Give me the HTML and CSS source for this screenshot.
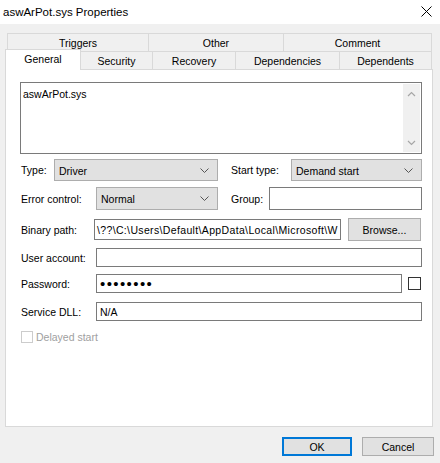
FILE: index.html
```html
<!DOCTYPE html>
<html>
<head>
<meta charset="utf-8">
<link rel="stylesheet" href="styles.css">
</head>
<body>
<div class="window">
  <div class="titlebar">
    <span class="title">aswArPot.sys Properties</span>
    <svg class="close" width="11" height="11" viewBox="0 0 11 11"><path d="M0.5 0.5 L10.5 10.5 M10.5 0.5 L0.5 10.5" stroke="#000" stroke-width="1" fill="none"/></svg>
  </div>
  <div class="tabs">
    <div class="tabrow row1">
      <div class="tab">Triggers</div>
      <div class="tab">Other</div>
      <div class="tab">Comment</div>
    </div>
    <div class="tabrow row2">
      <div class="tab active t-general">General</div>
      <div class="tab t-security">Security</div>
      <div class="tab t-recovery">Recovery</div>
      <div class="tab t-deps">Dependencies</div>
      <div class="tab t-dependents">Dependents</div>
    </div>
  </div>
  <div class="panel">
    <div class="desc">
      <div class="desc-text">aswArPot.sys</div>
      <div class="scrollbar">
        <svg width="9" height="6" viewBox="0 0 9 6"><path d="M1 5 L4.5 1.5 L8 5" stroke="#a6a6a6" stroke-width="1.2" fill="none"/></svg>
        <svg width="9" height="6" viewBox="0 0 9 6"><path d="M1 1 L4.5 4.5 L8 1" stroke="#a6a6a6" stroke-width="1.2" fill="none"/></svg>
      </div>
    </div>

    <div class="row r-type">
      <label class="lbl w-type">Type:</label>
      <div class="combo c-type"><span>Driver</span><svg width="9" height="5" viewBox="0 0 9 5"><path d="M0.5 0.5 L4.5 4.5 L8.5 0.5" stroke="#555" fill="none"/></svg></div>
      <label class="lbl w-start">Start type:</label>
      <div class="combo grow"><span>Demand start</span><svg width="9" height="5" viewBox="0 0 9 5"><path d="M0.5 0.5 L4.5 4.5 L8.5 0.5" stroke="#555" fill="none"/></svg></div>
    </div>

    <div class="row r-error">
      <label class="lbl w-error">Error control:</label>
      <div class="combo c-error"><span>Normal</span><svg width="9" height="5" viewBox="0 0 9 5"><path d="M0.5 0.5 L4.5 4.5 L8.5 0.5" stroke="#555" fill="none"/></svg></div>
      <label class="lbl w-group">Group:</label>
      <div class="textbox grow"></div>
    </div>

    <div class="row r-binary">
      <label class="lbl w-binary">Binary path:</label>
      <div class="textbox path"><span class="path-text">\??\C:\Users\Default\AppData\Local\Microsoft\W</span></div>
      <div class="button browse">Browse...</div>
    </div>

    <div class="row r-user">
      <label class="lbl w-error">User account:</label>
      <div class="textbox grow"></div>
    </div>

    <div class="row r-pass">
      <label class="lbl w-error">Password:</label>
      <div class="textbox pw"><span class="dots">••••••••</span></div>
      <div class="check pw-check"></div>
    </div>

    <div class="row r-dll">
      <label class="lbl w-error">Service DLL:</label>
      <div class="textbox grow"><span>N/A</span></div>
    </div>

    <div class="row r-delayed">
      <div class="check disabled"></div>
      <span class="delayed-label">Delayed start</span>
    </div>
  </div>
  <div class="footer">
    <div class="button ok">OK</div>
    <div class="button cancel">Cancel</div>
  </div>
</div>
</body>
</html>
```

FILE: styles.css
```css
* { box-sizing: border-box; }
html, body {
  margin: 0;
  padding: 0;
  background: #f0f0f0;
  font-family: "Liberation Sans", Arial, sans-serif;
  font-size: 10.5px;
  color: #000;
}
.window {
  width: 440px;
  height: 463px;
  background: #f0f0f0;
  overflow: hidden;
}
.titlebar {
  height: 24px;
  background: #fff;
  display: flex;
  align-items: center;
  justify-content: space-between;
  padding: 0 8px 0 3px;
}
.title {
  font-size: 11.5px;
  margin-top: -1px;
}
.close { display: block; margin-top: -1px; }

.tabs { margin-top: 9px; }
.tabrow { display: flex; height: 18px; }
.row1 { margin-left: 7px; }
.row1 .tab:nth-child(1) { width: 142px; border-left: 1px solid #d9d9d9; }
.row1 .tab:nth-child(2) { width: 135px; }
.row1 .tab:nth-child(3) { width: 148px; }
.tab {
  height: 18px;
  border-top: 1px solid #d9d9d9;
  border-right: 1px solid #d9d9d9;
  background: #f0f0f0;
  display: flex;
  align-items: center;
  justify-content: center;
  padding-top: 1px;
}
.row2 { margin-left: 5px; align-items: flex-end; }
.t-general {
  width: 76px;
  height: 21px;
  margin-bottom: -1px;
  background: #fff;
  border-left: 1px solid #d9d9d9;
  position: relative;
  z-index: 1;
  padding-top: 0;
  padding-bottom: 3px;
}
.t-security { width: 72px; }
.t-recovery { width: 83px; }
.t-deps { width: 104px; }
.t-dependents { width: 92px; }

.panel {
  margin-left: 5px;
  width: 428px;
  height: 358px;
  background: #fff;
  border: 1px solid #d9d9d9;
  padding: 12px 10px 0 14px;
}
.desc {
  height: 72px;
  border: 1px solid #7a7a7a;
  display: flex;
}
.desc-text {
  flex: 1;
  padding: 5px 2px;
}
.scrollbar {
  width: 17px;
  margin: 1px 1px 1px 0;
  background: #f0f0f0;
  display: flex;
  flex-direction: column;
  align-items: center;
  justify-content: space-between;
  padding: 7px 0 6px;
}
.scrollbar svg { display: block; }

.row { display: flex; align-items: center; }
.lbl { display: block; padding-left: 1px; white-space: nowrap; }
.r-type { margin-top: 5px; height: 22px; }
.r-error { margin-top: 6px; height: 23px; }
.r-binary { margin-top: 8px; height: 23px; }
.r-user { margin-top: 7px; height: 19px; }
.r-pass { margin-top: 7px; height: 19px; }
.r-dll { margin-top: 9px; height: 19px; }
.r-delayed { margin-top: 10px; height: 12px; }

.w-type { width: 34px; }
.w-start { width: 61px; margin-left: 12px; }
.w-error { width: 76px; }
.w-group { width: 39px; margin-left: 12px; }
.w-binary { width: 74px; }

.combo {
  height: 100%;
  background: #e1e1e1;
  border: 1px solid #adadad;
  display: flex;
  align-items: center;
  justify-content: space-between;
  padding: 1px 8px 0 4px;
}
.combo svg { display: block; margin-top: -1px; }
.c-type { width: 164px; }
.c-error { width: 122px; }
.grow { flex: 1; }
.textbox {
  height: 100%;
  background: #fff;
  border: 1px solid #7a7a7a;
  display: flex;
  align-items: center;
  padding: 1px 3px 0;
  overflow: hidden;
  white-space: nowrap;
}
.path { width: 247px; height: 21px; padding-left: 2px; padding-right: 0; }
.path-text { letter-spacing: 0.35px; }
.pw { width: 306px; flex: none; }
.dots {
  font-size: 15px;
  letter-spacing: 1.4px;
  line-height: 1;
  margin-top: -1px;
}
.button {
  display: flex;
  align-items: center;
  justify-content: center;
  background: #e1e1e1;
  border: 1px solid #adadad;
}
.browse { width: 73px; height: 23px; margin-left: 7px; }
.check {
  width: 13px;
  height: 13px;
  border: 1px solid #333;
  background: #fff;
}
.pw-check { margin-left: 6px; }
.check.disabled {
  width: 12px;
  height: 12px;
  border-color: #cccccc;
  margin-left: 1px;
}
.delayed-label {
  color: #a0a0a0;
  margin-left: 3px;
}
.footer {
  display: flex;
  justify-content: flex-end;
  gap: 10px;
  padding-right: 6px;
  margin-top: 10px;
}
.footer .button { height: 19px; }
.ok { width: 70px; border: 2px solid #0078d7; }
.cancel { width: 72px; }
```
